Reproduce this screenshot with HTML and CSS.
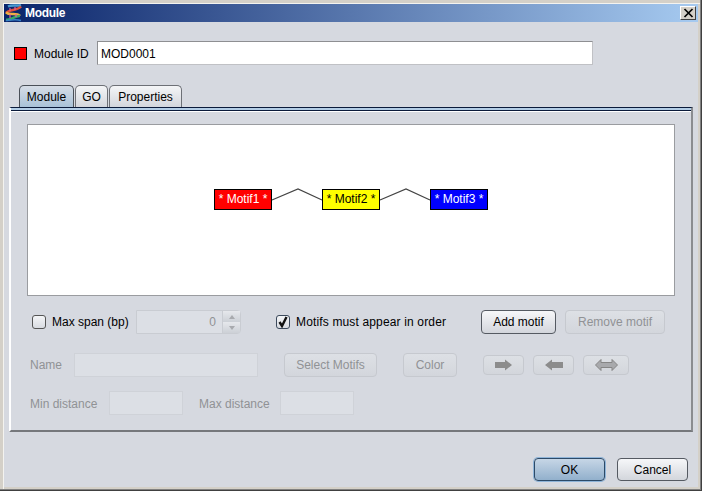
FILE: index.html
```html
<!DOCTYPE html>
<html>
<head>
  <link rel="stylesheet" href="styles.css">
</head>
<body>
  <div class="window">
    <div class="titlebar">
      <svg class="title-icon" width="17" height="18" viewBox="0 0 17 18">
        <path d="M3 2.500 C7 0.500 12 2.500 16 1" stroke="#4a9ad0" stroke-width="2.500" fill="none"/>
        <path d="M16 2.500 C12 7 4 5 1 9" stroke="#e0503a" stroke-width="2.500" fill="none"/>
        <path d="M1 8.500 C5 12 11 8 15 12" stroke="#f0b040" stroke-width="2.500" fill="none"/>
        <path d="M15 12 C11 11 5 17 1 15.500" stroke="#38a868" stroke-width="2.500" fill="none"/>
        <path d="M1 16.500 C6 16 11 15 16 16.500" stroke="#3a82c8" stroke-width="1.500" fill="none"/>
        <path d="M5 4v3M10 3v3M5 10v4M11 10v3" stroke="#e060a0" stroke-width="1.200" fill="none"/>
      </svg>
      <span class="title-text">Module</span>
      <div class="close-btn">
        <svg width="11" height="10" viewBox="0 0 11 10"><path d="M1.500 1l8 8M9.500 1l-8 8" stroke="#000" stroke-width="1.700"/></svg>
      </div>
    </div>

    <div class="content">
      <div class="id-row">
        <div class="swatch"></div>
        <label class="id-label">Module ID</label>
        <div class="field id-field">MOD0001</div>
      </div>

      <div class="tabs">
        <div class="tab tab-module active">Module</div>
        <div class="tab tab-go">GO</div>
        <div class="tab tab-props">Properties</div>
      </div>

      <div class="panel">
        <div class="canvas">
          <div class="node motif1">* Motif1 *</div>
          <div class="node motif2">* Motif2 *</div>
          <div class="node motif3">* Motif3 *</div>
          <svg class="links" width="646" height="169">
            <path d="M244 75 L270 64 L294 75 M352 75 L378 64 L402 75" stroke="#444" stroke-width="1.200" fill="none"/>
          </svg>
        </div>

        <div class="row row-span">
          <div class="check"></div>
          <span class="check-label span-label">Max span (bp)</span>
          <div class="spinner">
            <div class="spin-value">0</div>
            <div class="spin-arrows">
              <div class="spin-btn"><span class="tri-up"></span></div>
              <div class="spin-btn"><span class="tri-down"></span></div>
            </div>
          </div>
          <div class="check checked">
            <svg width="12" height="12" viewBox="0 0 12 12"><path d="M2.500 6 L5 10 L9.500 1" stroke="#111" stroke-width="2.400" fill="none"/></svg>
          </div>
          <span class="check-label order-label">Motifs must appear in order</span>
          <div class="btn add-btn">Add motif</div>
          <div class="btn off remove-btn">Remove motif</div>
        </div>

        <div class="row row-name">
          <span class="off-label name-label">Name</span>
          <div class="field-off name-field"></div>
          <div class="btn off select-btn">Select Motifs</div>
          <div class="btn off color-btn">Color</div>
          <div class="btn off arrow-btn">
            <svg width="18" height="12" viewBox="0 0 18 12"><path d="M0 3H10V0.500L17 6L10 11.500V9H0Z" fill="#8c8c8c"/></svg>
          </div>
          <div class="btn off arrow-btn">
            <svg width="18" height="12" viewBox="0 0 18 12"><path d="M18 3H7V0.500L0 6L7 11.500V9H18Z" fill="#8c8c8c"/></svg>
          </div>
          <div class="btn off arrow-btn wide">
            <svg width="23" height="12" viewBox="0 0 23 12"><path d="M0.500 6L6 0.500V3.500H17V0.500L22.500 6L17 11.500V8.500H6V11.500Z" fill="#a8a9ac" stroke="#858585"/></svg>
          </div>
        </div>

        <div class="row row-dist">
          <span class="off-label min-label">Min distance</span>
          <div class="field-off dist-field"></div>
          <span class="off-label max-label">Max distance</span>
          <div class="field-off dist-field"></div>
        </div>
      </div>

      <div class="footer">
        <div class="btn ok-btn">OK</div>
        <div class="btn cancel-btn">Cancel</div>
      </div>
    </div>
  </div>
</body>
</html>
```

FILE: styles.css
```css
html, body {
  margin: 0;
  padding: 0;
}

body {
  width: 702px;
  height: 491px;
  overflow: hidden;
  font-family: "Liberation Sans", Arial, sans-serif;
  font-size: 12px;
  color: #000;
}

.window {
  width: 702px;
  height: 491px;
  box-sizing: border-box;
  padding: 4px;
  display: flex;
  flex-direction: column;
  background-color: #d4d0c8;
  box-shadow: inset -1px -1px 0 #404040, inset -2px -2px 0 #808080, inset 3px 3px 0 #d4d0c8, inset 4px 4px 0 #f4f3ef;
}

.titlebar {
  height: 18px;
  display: flex;
  align-items: center;
  flex-shrink: 0;
  background: linear-gradient(to right, #0a246a, #a6caf0);
  color: white;
  font-weight: bold;
  font-size: 12px;
  letter-spacing: -0.3px;
}

.title-icon {
  margin-left: 1px;
  margin-right: 3px;
}

.title-text {
  flex: 1;
}

.close-btn {
  width: 16px;
  height: 14px;
  margin-right: 2px;
  display: flex;
  justify-content: center;
  align-items: center;
  background-color: #d4d0c8;
  border: 1px solid;
  border-color: #fff #404040 #404040 #fff;
  box-sizing: border-box;
}

.content {
  flex: 1;
  padding: 19px 5px 0 5px;
  background-color: #d6d9e0;
}

.id-row {
  display: flex;
  align-items: center;
  height: 24px;
}

.swatch {
  width: 11px;
  height: 11px;
  margin-left: 5px;
  background-color: #f00;
  border: 1px solid #000;
}

.id-label {
  margin-left: 7px;
  width: 63px;
  padding-top: 1px;
}

.field {
  height: 24px;
  box-sizing: border-box;
  line-height: 24px;
  padding-left: 3px;
  background-color: white;
  border: 1px solid;
  border-color: #8e8f92 #c0c1c5 #c0c1c5 #8e8f92;
}

.id-field {
  width: 496px;
}

.tabs {
  display: flex;
  margin-top: 20px;
  margin-left: 10px;
  gap: 1px;
  height: 22px;
}

.tab {
  box-sizing: border-box;
  height: 22px;
  text-align: center;
  line-height: 23px;
  border: 1px solid #6d7076;
  border-bottom: none;
  border-radius: 5px 5px 0 0;
  background: linear-gradient(to bottom, #f4f5f7, #d3d6dc);
}

.tab-module {
  width: 55px;
}

.tab-go {
  width: 33px;
}

.tab-props {
  width: 73px;
}

.tab.active {
  background: linear-gradient(to bottom, #d6dde6, #a9c2d8);
  border-color: #4a5058;
}

.panel {
  width: 684px;
  height: 325px;
  box-sizing: border-box;
  border-top: 1px solid #0a1a3a;
  border-left: 2px solid #fff;
  border-right: 2px solid #8a8c90;
  border-bottom: 2px solid #76787c;
  padding-top: 16px;
  box-shadow: inset 0 2px 0 #b3cde6, inset 0 3px 0 #0a1a3a, inset 0 4px 0 #fff;
}

.canvas {
  position: relative;
  width: 646px;
  height: 170px;
  margin-left: 16px;
  background-color: white;
  border: 1px solid #9a9ca0;
}

.links {
  position: absolute;
  left: 0;
  top: 0;
}

.node {
  position: absolute;
  top: 64px;
  width: 58px;
  height: 21px;
  box-sizing: border-box;
  border: 1px solid #000;
  text-align: center;
  line-height: 19px;
}

.motif1 {
  left: 186px;
  background-color: #f00;
  color: white;
}

.motif2 {
  left: 294px;
  background-color: #ff0;
  color: black;
}

.motif3 {
  left: 402px;
  background-color: #00f;
  color: white;
}

.row {
  display: flex;
  align-items: center;
  height: 24px;
}

.row-span {
  margin-top: 14px;
  padding-left: 21px;
}

.row-name {
  margin-top: 19px;
  padding-left: 19px;
}

.row-dist {
  margin-top: 14px;
  padding-left: 19px;
}

.check {
  width: 14px;
  height: 14px;
  box-sizing: border-box;
  border: 1px solid #555;
  border-radius: 3px;
  background: linear-gradient(to bottom, #f4f5f7, #d8dbe1);
  display: flex;
  justify-content: center;
  align-items: center;
  flex-shrink: 0;
}

.checked {
  margin-left: 35px;
  border-color: #3c4a5c;
}

.check-label {
  margin-left: 6px;
}

.span-label {
  width: 84px;
}

.order-label {
  width: 185px;
  letter-spacing: 0.15px;
}

.spinner {
  width: 105px;
  height: 24px;
  display: flex;
  box-sizing: border-box;
  border: 1px solid #c9ccd2;
  border-radius: 0 4px 4px 0;
  background-color: #dcdfe5;
}

.spin-value {
  flex: 1;
  text-align: right;
  padding-right: 6px;
  line-height: 23px;
  color: #909295;
}

.spin-arrows {
  width: 17px;
  display: flex;
  flex-direction: column;
  border-left: 1px solid #c9ccd2;
}

.spin-btn {
  flex: 1;
  display: flex;
  justify-content: center;
  align-items: center;
  background: linear-gradient(to bottom, #e6e8ec, #ccd0d6);
}

.tri-up {
  border-left: 3px solid transparent;
  border-right: 3px solid transparent;
  border-bottom: 4px solid #a8aaae;
}

.tri-down {
  border-left: 3px solid transparent;
  border-right: 3px solid transparent;
  border-top: 4px solid #a8aaae;
}

.btn {
  height: 24px;
  box-sizing: border-box;
  border: 1px solid #555a62;
  border-radius: 4px;
  background: linear-gradient(to bottom, #f6f7f9, #d3d6dc);
  display: flex;
  justify-content: center;
  align-items: center;
  flex-shrink: 0;
}

.btn.off {
  border-color: #c6c9cf;
  background: linear-gradient(to bottom, #dde0e5, #d3d6dc);
  color: #909295;
}

.add-btn {
  width: 75px;
}

.remove-btn {
  width: 100px;
  margin-left: 9px;
}

.off-label {
  color: #909295;
}

.name-label {
  width: 44px;
}

.field-off {
  height: 24px;
  box-sizing: border-box;
  background-color: #dcdfe5;
  border: 1px solid #cfd2d8;
}

.name-field {
  width: 184px;
}

.select-btn {
  width: 93px;
  margin-left: 26px;
}

.color-btn {
  width: 54px;
  margin-left: 26px;
}

.arrow-btn {
  width: 41px;
  height: 20px;
  margin-left: 9px;
}

.color-btn + .arrow-btn {
  margin-left: 26px;
}

.arrow-btn.wide {
  width: 46px;
}

.min-label {
  width: 79px;
  padding-top: 1px;
}

.max-label {
  margin-left: 16px;
  width: 81px;
  padding-top: 1px;
}

.dist-field {
  width: 74px;
}

.footer {
  display: flex;
  justify-content: flex-end;
  gap: 12px;
  margin-top: 26px;
  padding-right: 5px;
}

.ok-btn {
  width: 71px;
  height: 23px;
  border-color: #2c4a68;
  background: linear-gradient(to bottom, #c6d6e6, #92b0cc);
  box-shadow: 0 0 0 1px #8fb4d8;
}

.cancel-btn {
  width: 71px;
  height: 23px;
}
```
